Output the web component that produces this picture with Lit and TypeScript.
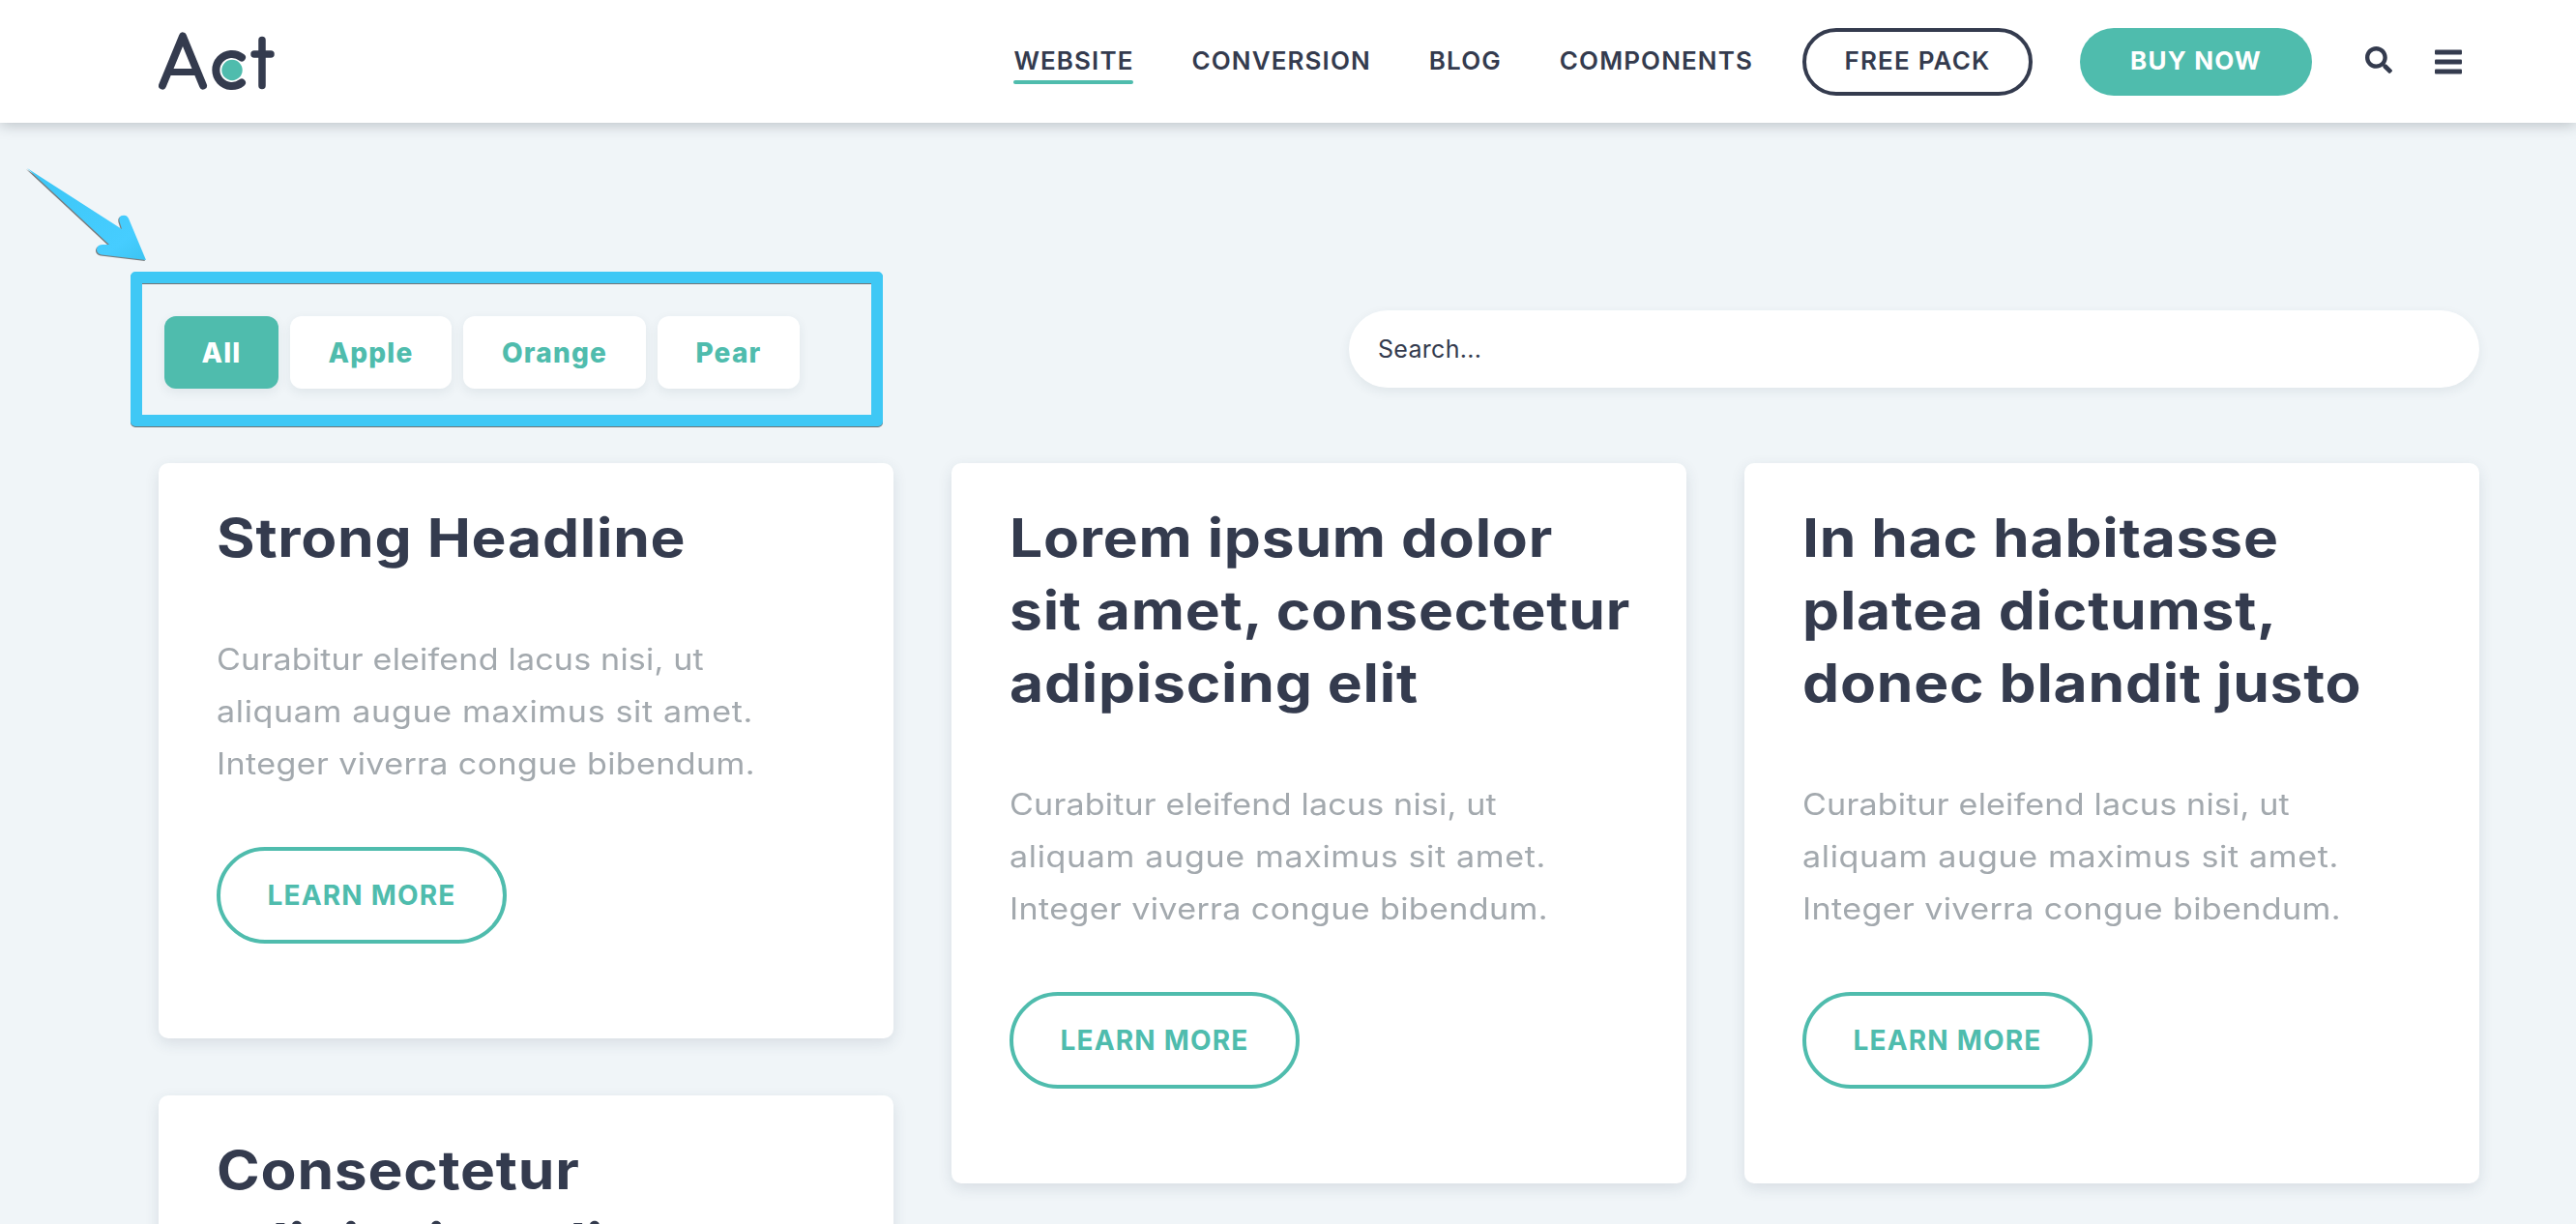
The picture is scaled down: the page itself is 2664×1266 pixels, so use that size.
import { LitElement, css, html } from 'lit';
import { customElement } from 'lit/decorators.js';

const body = [
  { text: 'Curabitur eleifend lacus nisi, ut', cls: 'tight' },
  { text: 'aliquam augue maximus sit amet.', cls: '' },
  { text: 'Integer viverra congue bibendum.', cls: 'snug' },
];

const filters = [
  { label: 'All', cls: 'on all' },
  { label: 'Apple', cls: 'apple' },
  { label: 'Orange', cls: 'orange' },
  { label: 'Pear', cls: 'pear' },
];

const columns = [
  [
    { title: ['Strong Headline'] },
    { title: ['Consectetur', 'adipiscing elit'] },
  ],
  [{ title: ['Lorem ipsum dolor', 'sit amet, consectetur', 'adipiscing elit'] }],
  [{ title: ['In hac habitasse', 'platea dictumst,', 'donec blandit justo'] }],
];

@customElement('app-root')
export class AppRoot extends LitElement {
  static styles = css`
    :host {
      display: block;
      position: relative;
      height: 1266px;
      overflow: hidden;
      background: #f0f5f8;
      color: #343b4e;
      font-family: Inter, 'Liberation Sans', sans-serif;
    }

    header {
      display: flex;
      align-items: center;
      height: 127px;
      padding: 0 118px 0 164px;
      background: #fff;
      box-shadow: 0 2px 14px rgba(40, 50, 60, 0.28);
      position: relative;
    }

    .logo {
      display: block;
      width: 122px;
      height: 64px;
    }

    nav {
      display: flex;
      align-items: center;
      margin-left: auto;
    }

    .link {
      position: relative;
      padding-bottom: 3px;
      font-size: 26px;
      font-weight: 600;
      letter-spacing: 1.1px;
      margin-right: 60px;
    }

    .link.active::after {
      content: '';
      position: absolute;
      left: 0;
      right: 1px;
      bottom: -6px;
      height: 4px;
      border-radius: 2px;
      background: #4fbcad;
    }

    .pill {
      display: flex;
      align-items: center;
      justify-content: center;
      box-sizing: border-box;
      height: 70px;
      padding-bottom: 2px;
      border-radius: 35px;
      font-size: 26px;
      font-weight: 600;
      letter-spacing: 1.2px;
    }

    .pill.outline {
      width: 238px;
      border: 4px solid #343b4e;
      margin-left: -9px;
    }

    .pill.solid {
      width: 240px;
      margin-left: 49px;
      background: #4fbcad;
      color: #fff;
      font-weight: 700;
    }

    .icon {
      display: block;
      width: 28px;
      height: 28px;
      fill: #343b4e;
    }

    .icon.search {
      margin: -3px 0 0 55px;
    }

    .icon.bars {
      margin-left: 44px;
    }

    main {
      padding: 194px 100px 0 164px;
    }

    .toolbar {
      display: flex;
      justify-content: space-between;
      align-items: flex-start;
      margin-bottom: 77px;
    }

    .filters {
      display: flex;
      gap: 12px;
      margin: 6px 0 0 6px;
    }

    .filter {
      display: flex;
      align-items: center;
      justify-content: center;
      height: 75px;
      border-radius: 12px;
      background: #fff;
      color: #4fbcad;
      font-size: 28px;
      font-weight: 800;
      letter-spacing: 1.2px;
      box-shadow: 0 4px 12px rgba(40, 60, 80, 0.08);
    }

    .filter.on {
      background: #4fbcad;
      color: #fff;
    }

    .filter.all {
      width: 118px;
    }

    .filter.apple {
      width: 167px;
    }

    .filter.orange {
      width: 189px;
    }

    .filter.pear {
      width: 147px;
    }

    .search-box {
      box-sizing: border-box;
      width: 1169px;
      height: 80px;
      padding-left: 30px;
      display: flex;
      align-items: center;
      border-radius: 40px;
      background: #fff;
      font-size: 25px;
      letter-spacing: 0.3px;
      box-shadow: 0 4px 12px rgba(40, 60, 80, 0.08);
    }

    .columns {
      display: flex;
      gap: 60px;
      align-items: flex-start;
    }

    .column {
      display: flex;
      flex-direction: column;
      gap: 59px;
      width: 760px;
    }

    .card {
      box-sizing: border-box;
      padding: 40px 60px 98px;
      border-radius: 10px;
      background: #fff;
      box-shadow: 0 5px 15px rgba(40, 60, 80, 0.12);
    }

    /* Inter is narrower than the reference face, so widen the long copy */
    h2 {
      margin: 0 0 61px;
      font-size: 55px;
      line-height: 75px;
      font-weight: 700;
      letter-spacing: 0.7px;
      white-space: nowrap;
      transform: scaleX(1.1);
      transform-origin: left;
    }

    p {
      margin: 0 0 59px;
      font-size: 31px;
      line-height: 54px;
      letter-spacing: 0.57px;
      color: #a3a9ae;
      white-space: nowrap;
      transform: scaleX(1.1);
      transform-origin: left;
    }

    p span {
      display: block;
    }

    p .tight {
      letter-spacing: 0.15px;
    }

    p .snug {
      letter-spacing: 0.33px;
    }

    .more {
      display: flex;
      align-items: center;
      justify-content: center;
      box-sizing: border-box;
      width: 300px;
      height: 100px;
      border: 4px solid #4fbcad;
      border-radius: 50px;
      color: #4fbcad;
      font-size: 28px;
      font-weight: 700;
      letter-spacing: 1.2px;
    }

    .frame {
      position: absolute;
      left: 135px;
      top: 281px;
      box-sizing: border-box;
      width: 778px;
      height: 160px;
      border: 12px solid #3fc8f5;
      border-radius: 5px;
      filter: drop-shadow(0 1px 0 rgba(60, 60, 60, 0.7));
    }

    .arrow {
      position: absolute;
      left: 0;
      top: 150px;
      width: 180px;
      height: 140px;
      filter: drop-shadow(-0.5px 1px 0 rgba(70, 70, 70, 0.7));
    }
  `;

  render() {
    return html`
      <header>
        <svg class="logo" viewBox="0 0 122 64" fill="none" stroke="#343b4e" stroke-width="8" stroke-linecap="round">
          <path d="M4 56.500 L25 5.500 L46 56.500" stroke-linejoin="round" />
          <path d="M13 42.500 H38" stroke-width="7" />
          <path d="M86 27.500 A16.500 16.500 0 1 0 86 53.500" />
          <circle cx="76" cy="40.500" r="10.700" fill="#4fbcad" stroke="none" />
          <path d="M107 9.500 V56.500 M99 24 H116" stroke-width="7.500" />
        </svg>
        <nav>
          <span class="link active">WEBSITE</span>
          <span class="link">CONVERSION</span>
          <span class="link">BLOG</span>
          <span class="link">COMPONENTS</span>
          <span class="pill outline">FREE PACK</span>
          <span class="pill solid">BUY NOW</span>
          <svg class="icon search" viewBox="0 0 512 512">
            <path d="M505 442.7L405.3 343c-4.5-4.5-10.6-7-17-7H372c27.6-35.3 44-79.7 44-128C416 93.1 322.9 0 208 0S0 93.1 0 208s93.1 208 208 208c48.3 0 92.7-16.4 128-44v16.3c0 6.4 2.5 12.5 7 17l99.7 99.7c9.4 9.4 24.6 9.4 33.9 0l28.3-28.3c9.4-9.4 9.4-24.6.1-34zM208 336c-70.7 0-128-57.2-128-128 0-70.7 57.2-128 128-128 70.7 0 128 57.2 128 128 0 70.7-57.2 128-128 128z" />
          </svg>
          <svg class="icon bars" viewBox="0 0 28 28">
            <rect x="0" y="1.500" width="28" height="5" rx="1" />
            <rect x="0" y="11.500" width="28" height="5" rx="1" />
            <rect x="0" y="21.500" width="28" height="5" rx="1" />
          </svg>
        </nav>
      </header>
      <main>
        <div class="toolbar">
          <div class="filters">
            ${filters.map((f) => html`<span class="filter ${f.cls}">${f.label}</span>`)}
          </div>
          <div class="search-box">Search...</div>
        </div>
        <div class="columns">
          ${columns.map(
            (cards) => html`<div class="column">
              ${cards.map(
                (card) => html`<article class="card">
                  <h2>${card.title.map((line) => html`${line}<br />`)}</h2>
                  <p>${body.map((line) => html`<span class=${line.cls}>${line.text}</span>`)}</p>
                  <a class="more">LEARN MORE</a>
                </article>`
              )}
            </div>`
          )}
        </div>
      </main>
      <div class="frame"></div>
      <svg class="arrow" viewBox="0 150 180 140">
        <defs>
          <linearGradient id="arrow-fill" x1="0" y1="0" x2="1" y2="1">
            <stop offset="0" stop-color="#3cc6f5" />
            <stop offset="0.8" stop-color="#46cdff" />
            <stop offset="1" stop-color="#3cc4f2" />
          </linearGradient>
        </defs>
        <path
          fill="url(#arrow-fill)"
          d="M28 174 L126 237 L123.500 229 Q122.500 224 126 223 Q131 221.500 133 226 L151 269 L105 263.500 Q99.500 262 100 257.500 Q101 253 106 253 L113 253 Z"
        />
      </svg>
    `;
  }
}
